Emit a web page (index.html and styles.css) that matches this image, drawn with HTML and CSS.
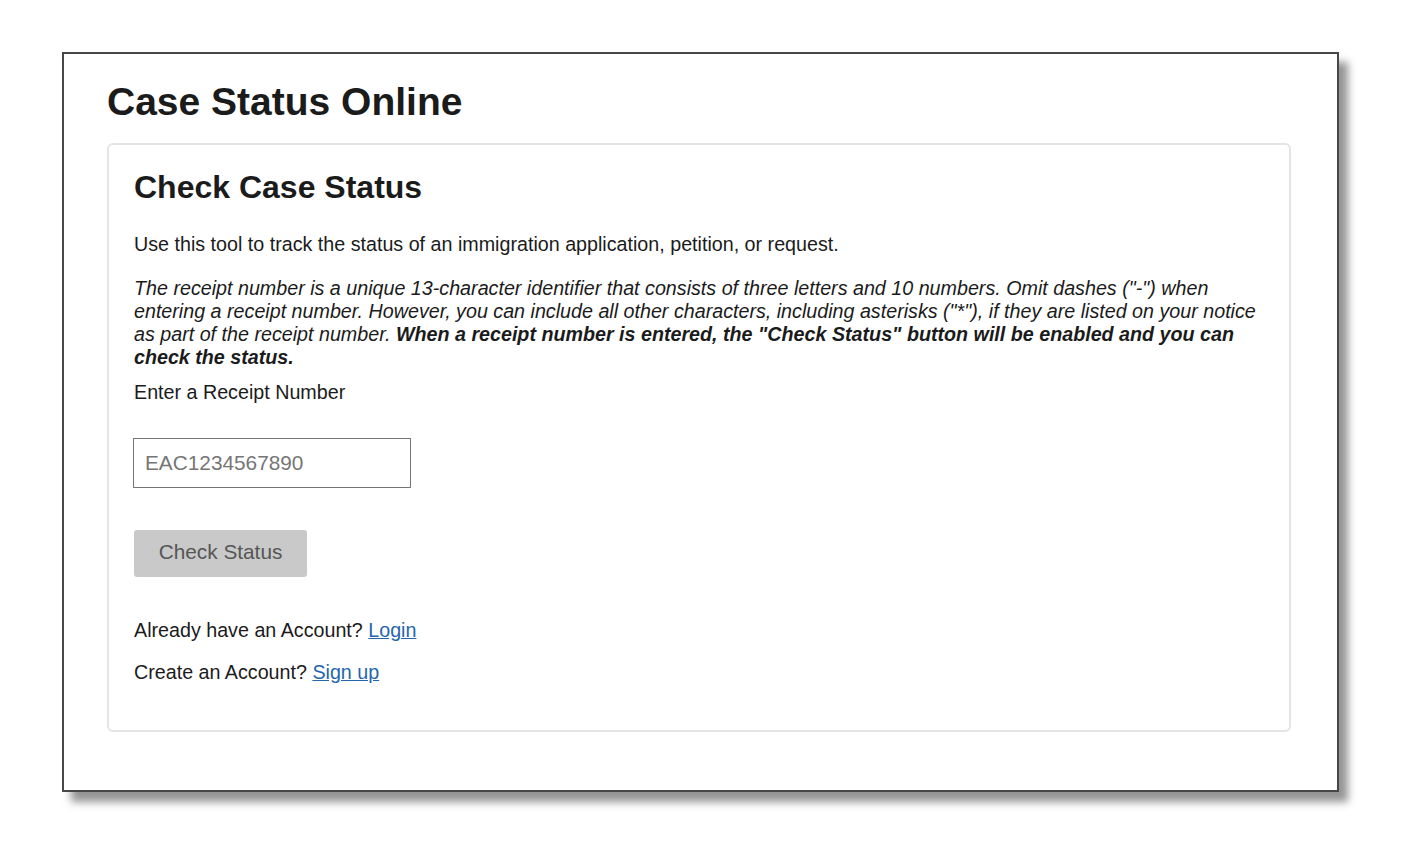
FILE: index.html
```html
<!DOCTYPE html>
<html lang="en">
<head>
<meta charset="utf-8">
<title>Case Status Online</title>
<link rel="stylesheet" href="styles.css">
</head>
<body>
  <div class="frame">
    <h1 class="page-title">Case Status Online</h1>
    <section class="card">
      <h2 class="card-title">Check Case Status</h2>
      <p class="intro">Use this tool to track the status of an immigration application, petition, or request.</p>
      <p class="hint">The receipt number is a unique 13-character identifier that consists of three letters and 10 numbers. Omit dashes ("-") when entering a receipt number. However, you can include all other characters, including asterisks ("*"), if they are listed on your notice as part of the receipt number. <strong>When a receipt number is entered, the "Check Status" button will be enabled and you can check the status.</strong></p>
      <label class="field-label" for="receipt">Enter a Receipt Number</label>
      <input class="receipt-input" id="receipt" type="text" placeholder="EAC1234567890">
      <button class="check-btn" type="button" disabled>Check Status</button>
      <p class="account-line">Already have an Account? <a href="#" class="link">Login</a></p>
      <p class="account-line second">Create an Account? <a href="#" class="link">Sign up</a></p>
    </section>
  </div>
</body>
</html>
```

FILE: styles.css
```css
html, body {
  margin: 0;
  padding: 0;
  background: #ffffff;
}

body {
  font-family: "Liberation Sans", Arial, sans-serif;
  color: #1b1b1b;
  padding: 52px 0 60px 62px;
}

.frame {
  box-sizing: border-box;
  width: 1277px;
  min-height: 740px;
  padding: 26px 46px 58px 43px;
  border: 2px solid #474747;
  background: #ffffff;
  box-shadow: 9px 10px 8px rgba(0, 0, 0, 0.42);
}

.page-title {
  margin: 0 0 19px;
  font-size: 39px;
  line-height: 44px;
  font-weight: 700;
  color: #1b1b1b;
}

.card {
  display: flex;
  flex-direction: column;
  align-items: flex-start;
  border: 2px solid #e4e4e4;
  border-radius: 6px;
  padding: 24px 25px 46px 25px;
}

.card-title {
  margin: 0 0 28px;
  font-size: 32px;
  line-height: 36px;
  font-weight: 700;
  color: #1b1b1b;
}

.intro,
.hint,
.field-label,
.account-line {
  font-size: 19.7px;
  line-height: 23px;
}

.intro {
  margin: 0 0 21px;
}

.hint {
  margin: 0 0 12px;
  font-style: italic;
}

.hint strong {
  font-weight: 700;
}

.field-label {
  display: block;
  margin: 0 0 34px;
}

.receipt-input {
  box-sizing: border-box;
  width: 278px;
  height: 50px;
  margin: 0 0 42px -1px;
  padding: 0 11px;
  border: 1.5px solid #767676;
  border-radius: 0;
  font-family: "Liberation Sans", Arial, sans-serif;
  font-size: 20.8px;
  color: #1b1b1b;
  background: #ffffff;
}

.receipt-input::placeholder {
  color: #767676;
}

.check-btn {
  box-sizing: border-box;
  width: 173px;
  height: 47px;
  margin: 0 0 42px;
  padding: 0 0 3px;
  border: 0;
  border-radius: 3px;
  background: #c9c9c9;
  color: #565656;
  font-family: "Liberation Sans", Arial, sans-serif;
  font-size: 20.8px;
}

.account-line {
  margin: 0 0 19px;
}

.account-line.second {
  margin-bottom: 0;
}

.link {
  color: #2466ad;
  text-decoration: underline;
}
```
